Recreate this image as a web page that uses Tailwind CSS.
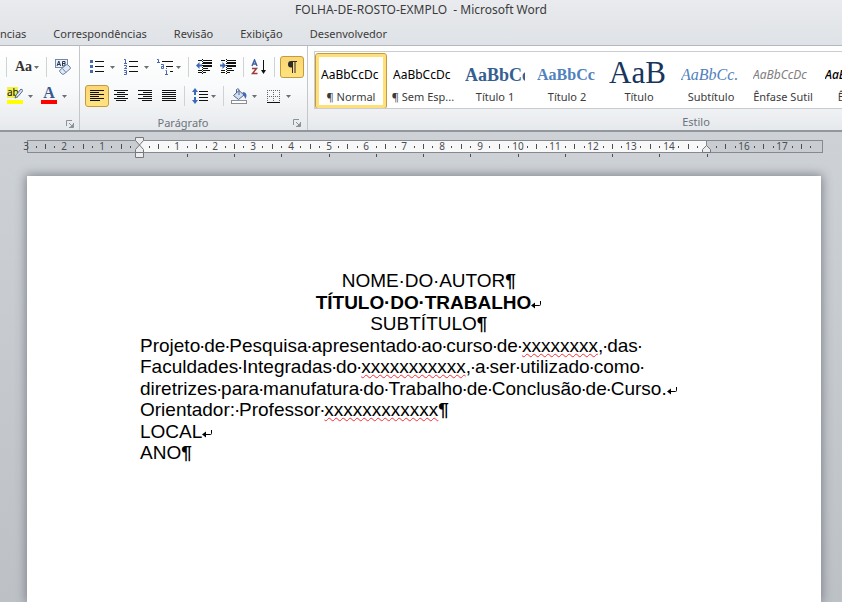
<!DOCTYPE html>
<html lang="pt-BR">
<head>
  <meta charset="UTF-8">
  <meta name="viewport" content="width=device-width, initial-scale=1.0">
  <title>FOLHA-DE-ROSTO-EXMPLO - Microsoft Word</title>
  <script src="https://cdn.jsdelivr.net/npm/@tailwindcss/browser@4"></script>
</head>
<body class="min-h-screen flex flex-col overflow-hidden bg-white font-['Noto_Sans',sans-serif] text-[11px] text-[#3b3b3b]">

  <!-- shared icon shapes -->
  <svg class="hidden">
    <symbol id="caret" viewBox="0 0 5 3"><path d="M0 0h5L2.500 3z" fill="#6b6f75"/></symbol>
    <symbol id="launcher" viewBox="0 0 8 8">
      <path d="M.5 6V.5H6" fill="none" stroke="#8b9198"/>
      <path d="M3 3l3 3M7.500 3v4.500H3" fill="none" stroke="#8b9198"/>
      <path d="M7 4v3H4z" fill="#8b9198"/>
    </symbol>
    <symbol id="return" viewBox="0 0 10 8">
      <path d="M9.500 0v3.500q0 1-1 1H2" fill="none" stroke="#000"/>
      <path d="M0 4.500L4 1.500v6z" fill="#000"/>
    </symbol>
  </svg>

  <!-- title bar and tabs -->
  <header class="bg-linear-to-b from-[#e9ebee] to-[#dfe2e6] border-b border-[#b3b8be]">
    <h1 class="h-5 leading-5 text-center text-[12px] whitespace-pre">FOLHA-DE-ROSTO-EXMPLO  - Microsoft Word</h1>
    <nav class="flex gap-[27px] h-[25px] pt-1 leading-5 whitespace-nowrap">
      <a href="#">ncias</a>
      <a href="#">Correspondências</a>
      <a href="#">Revisão</a>
      <a href="#">Exibição</a>
      <a href="#">Desenvolvedor</a>
    </nav>
  </header>

  <!-- ribbon -->
  <section class="flex h-[86px] bg-linear-to-b from-white via-[#f9fafb] to-[#e6e9ec] border-b-2 border-[#92979d]">
    <div class="w-20 shrink-0 flex flex-col border-r border-[#c3c7cc] pt-[10px] pl-[3px]">
      <div class="flex items-center h-[22px]">
        <span class="w-px h-5 mx-[3px] bg-[#cfd2d6]"></span>
        <button aria-label="Maiúsculas e minúsculas" class="flex items-center gap-[2px] pl-[5px] pr-1 h-[22px]">
          <span class="font-['Liberation_Serif',serif] font-bold text-[14px] leading-4 text-[#333]">Aa</span>
          <svg class="w-[5px] h-[3px]"><use href="#caret"/></svg>
        </button>
        <span class="w-px h-5 mx-[3px] bg-[#cfd2d6]"></span>
        <button aria-label="Limpar formatação" class="w-[26px] flex justify-center">
          <svg class="w-4 h-4" viewBox="0 0 16 16">
            <rect x=".5" y=".5" width="12" height="8" fill="#eef3fa" stroke="#7088ad"/>
            <path d="M2 7l1.800-5L5.600 7M2.600 5.500h2.500M7.500 7V2.500h2.500V7H7.500M7.500 4.500h2.500" fill="none" stroke="#26364f"/>
            <path d="M5 11l6-5q1-1 2 0l2 2q1 1 0 2l-6 5q-1 .8-2 0l-2-2q-1-1 0-2z" fill="#dfe8f4" stroke="#6d86ad"/>
            <path d="M7.500 9.500l3.500 4" stroke="#6d86ad"/>
          </svg>
        </button>
      </div>
      <div class="flex items-center h-[22px] mt-[7px]">
        <button aria-label="Cor do realce" class="flex items-center gap-[5px] px-1 h-[22px]">
          <svg class="w-4 h-[18px]" viewBox="0 0 16 18">
            <rect width="11" height="11" fill="#f2f04a"/>
            <text x="0" y="9" font-size="10" font-family="Noto Sans" fill="#111">ab</text>
            <path d="M8 11l1-3 5-6 2 1.500-5 6z" fill="#dbe6f5" stroke="#53678a"/>
            <rect y="13" width="16" height="4" fill="#ff0"/>
          </svg>
          <svg class="w-[5px] h-[3px]"><use href="#caret"/></svg>
        </button>
        <button aria-label="Cor da fonte" class="flex items-center gap-[5px] px-1 h-[22px]">
          <svg class="w-4 h-[18px]" viewBox="0 0 16 18">
            <text x="8" y="11" text-anchor="middle" font-size="16" font-weight="bold" font-family="Liberation Serif" fill="#38588f">A</text>
            <rect y="13" width="16" height="4" fill="#f00"/>
          </svg>
          <svg class="w-[5px] h-[3px]"><use href="#caret"/></svg>
        </button>
      </div>
      <div class="flex justify-end pr-[5px] pt-[13px]">
        <button aria-label="Opções de fonte"><svg class="w-2 h-2 block"><use href="#launcher"/></svg></button>
      </div>
    </div>

    <div class="w-[228px] shrink-0 flex flex-col border-r border-[#c3c7cc] pt-[10px] pl-[5px] pr-[3px]">
      <div class="flex items-center h-[22px]">
        <button aria-label="Marcadores" class="flex items-center gap-[5px] px-1 h-[22px]">
          <svg class="w-4 h-4" viewBox="0 0 16 16">
            <path d="M1 1h3v3H1zM1 6h3v3H1zM1 11h3v3H1z" fill="#4a69ac"/>
            <path d="M6 2.500h9M6 7.500h9M6 12.500h9" stroke="#111"/>
          </svg>
          <svg class="w-[5px] h-[3px]"><use href="#caret"/></svg>
        </button>
        <button aria-label="Numeração" class="flex items-center gap-[5px] px-1 h-[22px]">
          <svg class="w-4 h-4" viewBox="0 0 16 16">
            <path d="M1 .5h1.500v4M1 4.500h3M1 6.500h2.500v1.500L1.500 9.500H4M1 11.500h2.500v4H1M1.500 13.500h2" fill="none" stroke="#4a69ac"/>
            <path d="M6 2.500h9M6 7.500h9M6 12.500h9" stroke="#111"/>
          </svg>
          <svg class="w-[5px] h-[3px]"><use href="#caret"/></svg>
        </button>
        <button aria-label="Lista de vários níveis" class="flex items-center gap-[3px] px-1 h-[22px]">
          <svg class="w-4 h-4" viewBox="0 0 16 16">
            <path d="M0 .5h1.500v3M0 3.500h3M4 5.500h2.500v4H4.500v-2h2M8.500 11.500h1v4M8 15.500h3M9 9.500h1" fill="none" stroke="#4a69ac"/>
            <path d="M5 2.500h11M9 7.500h7M13 12.500h3" stroke="#111"/>
          </svg>
          <svg class="w-[5px] h-[3px]"><use href="#caret"/></svg>
        </button>
        <span class="w-px h-5 mx-[3px] bg-[#cfd2d6]"></span>
        <button aria-label="Diminuir recuo" class="w-6 flex justify-center">
          <svg class="w-4 h-4" viewBox="0 0 16 16">
            <path d="M2 1.500h4M7 1.500h9M2 11.500h4M7 11.500h7M2 13.500h4M7 13.500h3" stroke="#111"/>
            <path d="M7 3h9v2H7zM7 6h9v2H7zM7 9h5v1H7z" fill="#111"/>
            <path d="M6.500 0v15" stroke="#111" stroke-dasharray="1 1"/>
            <path d="M0 6.500L3.500 3v2.500H6v2H3.500V10z" fill="#3f68b8"/>
          </svg>
        </button>
        <button aria-label="Aumentar recuo" class="w-6 flex justify-center">
          <svg class="w-4 h-4" viewBox="0 0 16 16">
            <path d="M1 1.500h4M7 1.500h9M1 11.500h4M7 11.500h7M1 13.500h4M7 13.500h3" stroke="#111"/>
            <path d="M7 3h9v2H7zM7 6h9v2H7zM7 9h5v1H7z" fill="#111"/>
            <path d="M6.500 0v15" stroke="#111" stroke-dasharray="1 1"/>
            <path d="M6 6.500L2.500 3v2.500H0v2h2.500V10z" fill="#3f68b8"/>
          </svg>
        </button>
        <span class="w-px h-5 mx-[3px] bg-[#cfd2d6]"></span>
        <button aria-label="Classificar" class="w-6 flex justify-center">
          <svg class="w-4 h-4" viewBox="0 0 16 16">
            <path d="M1 7L3.500 1 6 7M2 5h3" fill="none" stroke="#3f62a8" stroke-width="1.500"/>
            <path d="M1 9.500h4.500L1.500 14.500H6.500" fill="none" stroke="#9c3b3b" stroke-width="1.500"/>
            <path d="M12.500 1v13" stroke="#111"/>
            <path d="M10 11h5l-2.500 4z" fill="#111"/>
          </svg>
        </button>
        <span class="w-px h-5 mx-[3px] bg-[#cfd2d6]"></span>
        <button aria-label="Mostrar tudo" class="w-6 h-[22px] ml-auto flex items-center justify-center rounded-[3px] border border-[#c29b3f] bg-linear-to-b from-[#fbd676] to-[#ffe37e]">
          <svg class="w-3 h-3" viewBox="0 0 12 12">
            <path d="M5 0h6v1H9.500v11h-1V1H7v11H6V6.500H5Q2 6.500 2 3.300T5 0z" fill="#2b2b2b"/>
          </svg>
        </button>
      </div>
      <div class="flex items-center h-[22px] mt-[7px]">
        <button aria-label="Alinhar à esquerda" class="w-6 h-[22px] flex items-center justify-center rounded-[3px] border border-[#c29b3f] bg-linear-to-b from-[#fbd676] to-[#ffe37e]">
          <svg class="w-[14px] h-3" viewBox="0 0 14 12"><path d="M0 .5h14M0 2.500h9M0 4.500h14M0 6.500h9M0 8.500h14M0 10.500h10" stroke="#111"/></svg>
        </button>
        <button aria-label="Centralizar" class="w-6 h-[22px] flex items-center justify-center">
          <svg class="w-[14px] h-3" viewBox="0 0 14 12"><path d="M0 .5h14M3 2.500h8M0 4.500h14M3 6.500h8M0 8.500h14M2 10.500h10" stroke="#111"/></svg>
        </button>
        <button aria-label="Alinhar à direita" class="w-6 h-[22px] flex items-center justify-center">
          <svg class="w-[14px] h-3" viewBox="0 0 14 12"><path d="M0 .5h14M5 2.500h9M0 4.500h14M5 6.500h9M0 8.500h14M4 10.500h10" stroke="#111"/></svg>
        </button>
        <button aria-label="Justificar" class="w-6 h-[22px] flex items-center justify-center">
          <svg class="w-[14px] h-3" viewBox="0 0 14 12"><path d="M0 .5h14M0 2.500h14M0 4.500h14M0 6.500h14M0 8.500h14M0 10.500h14" stroke="#111"/></svg>
        </button>
        <span class="w-px h-5 mx-[3px] bg-[#cfd2d6]"></span>
        <button aria-label="Espaçamento" class="flex items-center gap-[3px] px-1 h-[22px]">
          <svg class="w-4 h-4" viewBox="0 0 16 16">
            <path d="M3 0l3 4H4v3H2V4H0zM3 16l3-4H4V9H2v3H0z" fill="#3f68b8"/>
            <path d="M7 3.500h9M7 6.500h9M7 9.500h9M7 12.500h9" stroke="#111"/>
          </svg>
          <svg class="w-[5px] h-[3px]"><use href="#caret"/></svg>
        </button>
        <span class="w-px h-5 mx-[3px] bg-[#cfd2d6]"></span>
        <button aria-label="Sombreamento" class="flex items-center gap-[5px] px-1 h-[22px]">
          <svg class="w-4 h-4" viewBox="0 0 16 16">
            <path d="M2.500 7.500L8 2.500l5 4.500-5.500 4.500z" fill="#d5e1f1" stroke="#4d6692"/>
            <path d="M8 7V1.500Q7 0 5.500 1.500V5" fill="none" stroke="#4d6692"/>
            <path d="M11.500 4q4 0 4 4l-1 3-1.500-3z" fill="#3f68b8"/>
            <rect x=".5" y="12.500" width="15" height="3" fill="#fff" stroke="#8b8f95"/>
          </svg>
          <svg class="w-[5px] h-[3px]"><use href="#caret"/></svg>
        </button>
        <button aria-label="Bordas" class="flex items-center gap-[5px] px-1 h-[22px]">
          <svg class="w-4 h-4" viewBox="0 0 16 16">
            <path d="M2 2.500h13M2 8.500h13M2.500 2v11M8.500 2v11M14.500 2v11" stroke="#666" stroke-dasharray="1 1"/>
            <path d="M2 14.500h13" stroke="#111"/>
          </svg>
          <svg class="w-[5px] h-[3px]"><use href="#caret"/></svg>
        </button>
      </div>
      <div class="flex items-center pr-[3px] pt-2 leading-4 text-[#6c737c]">
        <span class="flex-1 pr-3 text-center">Parágrafo</span>
        <button aria-label="Opções de parágrafo"><svg class="w-2 h-2 block"><use href="#launcher"/></svg></button>
      </div>
    </div>

    <div class="flex-1 min-w-0 flex flex-col pt-[5px] pl-[6px]">
      <div class="flex items-start h-[60px] border-y border-l border-[#c9ccd1] bg-white overflow-hidden whitespace-nowrap text-center">
        <button class="w-[72px] h-14 shrink-0 my-px px-[3px] rounded-[3px] border border-[#c29b3f] ring-3 ring-inset ring-[#ffdf78]">
          <span class="block h-8 pt-2 mx-[2px] overflow-hidden text-left text-black text-[12px] leading-5">AaBbCcDc</span>
          <span class="block leading-4">¶ Normal</span>
        </button>
        <button class="w-[72px] h-14 shrink-0 my-px px-[3px] border border-transparent">
          <span class="block h-8 pt-2 mx-[2px] overflow-hidden text-left text-black text-[12px] leading-5">AaBbCcDc</span>
          <span class="block leading-4">¶ Sem Esp...</span>
        </button>
        <button class="w-[72px] h-14 shrink-0 my-px px-[3px] border border-transparent">
          <span class="block h-8 pt-2 mx-[2px] overflow-hidden text-left text-[#365f91] font-['Liberation_Serif',serif] font-bold text-[18px] leading-5">AaBbCc</span>
          <span class="block leading-4">Título 1</span>
        </button>
        <button class="w-[72px] h-14 shrink-0 my-px px-[3px] border border-transparent">
          <span class="block h-8 pt-2 mx-[2px] overflow-hidden text-left text-[#4f81bd] font-['Liberation_Serif',serif] font-bold text-[16px] leading-5">AaBbCc</span>
          <span class="block leading-4">Título 2</span>
        </button>
        <button class="w-[72px] h-14 shrink-0 my-px px-[3px] border border-transparent">
          <span class="block h-8 pt-1 mx-[2px] overflow-hidden text-left text-[#17365d] font-['Liberation_Serif',serif] text-[31px] leading-6">AaB</span>
          <span class="block leading-4">Título</span>
        </button>
        <button class="w-[72px] h-14 shrink-0 my-px px-[3px] border border-transparent">
          <span class="block h-8 pt-2 mx-[2px] overflow-hidden text-left text-[#4f81bd] font-['Liberation_Serif',serif] italic text-[16px] leading-5">AaBbCc.</span>
          <span class="block leading-4">Subtítulo</span>
        </button>
        <button class="w-[72px] h-14 shrink-0 my-px px-[3px] border border-transparent">
          <span class="block h-8 pt-2 mx-[2px] overflow-hidden text-left text-[#808080] italic text-[12px] leading-5">AaBbCcDc</span>
          <span class="block leading-4">Ênfase Sutil</span>
        </button>
        <button class="w-[72px] h-14 shrink-0 my-px px-[3px] border border-transparent">
          <span class="block h-8 pt-2 mx-[2px] overflow-hidden text-left text-black italic font-medium text-[12px] leading-5">AaBbCcDc</span>
          <span class="block leading-4">Ênfase</span>
        </button>
      </div>
      <div class="pt-[5px] pl-[236px] leading-4 text-center text-[#6c737c]">Estilo</div>
    </div>
  </section>

  <!-- document area -->
  <main class="flex-1 flex flex-col overflow-hidden bg-linear-to-b from-[#ced2d7] to-[#bdc1c6] mb-[3px]">
    <svg id="ruler" class="w-full h-7 mt-1 shrink-0" font-family="Noto Sans" font-size="10" fill="#4a4d52"></svg>

    <article class="flex-1 mt-3 ml-[27px] mr-[21px] bg-white shadow-[0_0_10px_1px_#7c8188] pt-[94px] pl-[113px] pr-[114px] font-['Liberation_Sans',Arial,sans-serif] text-[19px] text-black whitespace-nowrap *:odd:leading-[22px] *:even:leading-[21px]">
      <p class="text-center">NOME<i class="wide-dot">·</i>DO<i class="wide-dot">·</i>AUTOR<b class="inline-block w-0">¶</b></p>
      <p class="text-center font-bold">TÍTULO<i class="wide-dot">·</i>DO<i class="wide-dot">·</i>TRABALHO<span class="inline-block w-0"><svg class="w-[10px] h-2"><use href="#return"/></svg></span></p>
      <p class="text-center">SUBTÍTULO<b class="inline-block w-0">¶</b></p>
      <p>Projeto<i class="dot">·</i>de<i class="dot">·</i>Pesquisa<i class="dot">·</i>apresentado<i class="dot">·</i>ao<i class="dot">·</i>curso<i class="dot">·</i>de<i class="dot">·</i><u class="decoration-wavy decoration-red-500 decoration-1 underline-offset-1">xxxxxxxx</u>,<i class="dot">·</i>das<i class="dot">·</i></p>
      <p>Faculdades<i class="dot">·</i>Integradas<i class="dot">·</i>do<i class="dot">·</i><u class="decoration-wavy decoration-red-500 decoration-1 underline-offset-1">xxxxxxxxxxx</u>,<i class="dot">·</i>a<i class="dot">·</i>ser<i class="dot">·</i>utilizado<i class="dot">·</i>como<i class="dot">·</i></p>
      <p>diretrizes<i class="dot">·</i>para<i class="dot">·</i>manufatura<i class="dot">·</i>do<i class="dot">·</i>Trabalho<i class="dot">·</i>de<i class="dot">·</i>Conclusão<i class="dot">·</i>de<i class="dot">·</i>Curso.<svg class="inline-block align-baseline w-[10px] h-2"><use href="#return"/></svg></p>
      <p>Orientador:<i class="dot">·</i>Professor<i class="dot">·</i><u class="decoration-wavy decoration-red-500 decoration-1 underline-offset-1">xxxxxxxxxxxx</u><b>¶</b></p>
      <p>LOCAL<svg class="inline-block align-baseline w-[10px] h-2"><use href="#return"/></svg></p>
      <p>ANO<b>¶</b></p>
    </article>
  </main>

  <script>
    // space marks: one narrow box in the body text, a wider one in the headings
    document.querySelectorAll('.dot').forEach(function (el) {
      el.className = 'inline-flex justify-center w-[4px] not-italic';
    });
    document.querySelectorAll('.wide-dot').forEach(function (el) {
      el.className = 'inline-flex justify-center w-[6px] not-italic';
    });

    // ruler: zero sits at the left margin, one centimetre is 37.8px
    const ruler = document.getElementById('ruler');
    const zero = 139.5;
    const cm = 37.8;
    let out = '<rect x="27.500" y="4.500" width="795" height="12" fill="#c9cdd2" stroke="#858a91"/>';
    out += '<rect x="139.500" y="4.500" width="567" height="12" fill="#f8f8f8" stroke="#858a91"/>';
    for (let q = -12; q <= 71; q++) {
      const x = Math.round(zero + q * cm / 4);
      if (q === 0 || q === 60) continue;
      if (q % 4 === 0) {
        out += `<text x="${x}" y="14" text-anchor="middle">${Math.abs(q / 4)}</text>`;
      } else if (q % 2 === 0) {
        out += `<rect x="${x}" y="8" width="1" height="5"/>`;
      } else {
        out += `<rect x="${x}" y="10" width="1" height="2"/>`;
      }
    }
    for (let t = 1; t <= 12; t++) {
      out += `<rect x="${Math.round(zero + t * cm * 1.25)}" y="18" width="1" height="3"/>`;
    }
    out += '<g fill="#ececec" stroke="#74787e"><path d="M135.500 1.500h8v3l-4 4.500-4-4.500zM135.500 16.500v-3l4-4.500 4 4.500v3zM135.500 16.500h8v5h-8z"/>';
    out += '<path d="M702.500 16.500v-3l4-4 4 4v3z"/></g>';
    ruler.innerHTML = out;
  </script>
</body>
</html>
